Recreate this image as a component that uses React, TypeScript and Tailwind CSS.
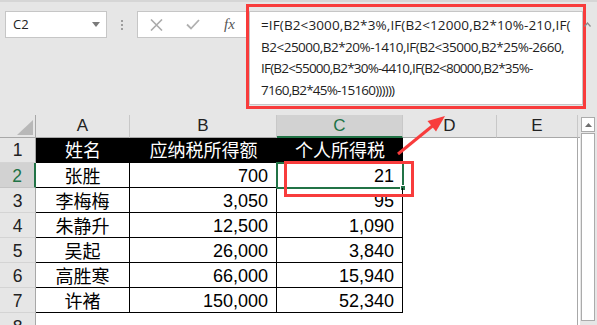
import { FC } from "react";

const rows = [
  { n: "2", name: "张胜", amount: "700", tax: "21" },
  { n: "3", name: "李梅梅", amount: "3,050", tax: "95" },
  { n: "4", name: "朱静升", amount: "12,500", tax: "1,090" },
  { n: "5", name: "吴起", amount: "26,000", tax: "3,840" },
  { n: "6", name: "高胜寒", amount: "66,000", tax: "15,940" },
  { n: "7", name: "许褚", amount: "150,000", tax: "52,340" },
];

// the lines wrap at fixed points in the formula bar
const formula = [
  { t: "=IF(B2<3000,B2*3%,IF(B2<12000,B2*10%-210,IF(", c: "tracking-[0.12px]" },
  { t: "B2<25000,B2*20%-1410,IF(B2<35000,B2*25%-2660,", c: "tracking-[-0.5px]" },
  { t: "IF(B2<55000,B2*30%-4410,IF(B2<80000,B2*35%-", c: "tracking-[-0.8px]" },
  { t: "7160,B2*45%-15160))))))", c: "tracking-[-0.8px]" },
];

const App: FC = () => {
  return (
    <div className="relative w-[597px] h-[325px] overflow-hidden bg-[#e6e6e6] font-['Liberation_Sans','Noto_Sans_CJK_SC',sans-serif] text-black">
      <div className="h-[2px] bg-[#d6d6d6]" />
      {/* formula bar */}
      <div className="flex items-start h-[113px]">
        <div className="ml-[5px] mt-[9px] w-[102px] h-[27px] bg-white border border-[#c6c6c6] flex items-center justify-between pl-[7px] pr-[6px]">
          <span className="text-[13px] text-[#222] font-['Open_Sans',sans-serif]">C2</span>
          <svg width="8" height="5" viewBox="0 0 8 5">
            <polygon points="0,0 8,0 4,5" fill="#7a7a7a" />
          </svg>
        </div>
        <div className="ml-[14px] mt-[18px] flex flex-col gap-[2px]">
          <div className="w-[2px] h-[2px] bg-[#9e9e9e]" />
          <div className="w-[2px] h-[2px] bg-[#9e9e9e]" />
          <div className="w-[2px] h-[2px] bg-[#9e9e9e]" />
        </div>
        <div className="ml-[14px] mt-[9px] w-[109px] h-[27px] bg-white border border-r-0 border-[#c6c6c6] flex items-center">
          <svg className="ml-[12px]" width="13" height="12" viewBox="0 0 13 12">
            <path d="M1 0.5 L12 11.5 M12 0.5 L1 11.5" stroke="#ababab" strokeWidth="1.6" />
          </svg>
          <svg className="ml-[23px]" width="14" height="11" viewBox="0 0 14 11">
            <path d="M1 5.5 L5 9.5 L13 1" stroke="#b0b0b0" strokeWidth="1.8" fill="none" />
          </svg>
          <span className="ml-[24px] text-[15px] italic text-[#555] font-['Liberation_Serif',serif] leading-none">fx</span>
        </div>
        <div className="mt-[2px] w-[340px] h-[105px] border-[3px] border-[#f83c3c] pt-[4px] pb-[1px]">
          <div className="h-full bg-white border border-[#c6c6c6] pl-[11px] pt-[3px] font-['Open_Sans',sans-serif] text-[13.5px] leading-[21.7px] text-[#1e1e1e]">
            {formula.map((l) => (
              <div key={l.t} className={`whitespace-nowrap ${l.c}`}>{l.t}</div>
            ))}
          </div>
        </div>
      </div>

      {/* sheet */}
      <div className="flex">
        <div className="w-[580px] bg-white">
          {/* column header */}
          <div className="flex h-[23px] bg-[#e6e6e6] text-[17px] text-[#222]">
            <div className="relative w-[36px] h-full border-r border-b border-[#a8a8a8]">
              <svg className="absolute right-[2px] bottom-[2px]" width="16" height="15" viewBox="0 0 16 15">
                <polygon points="16,0 16,15 0,15" fill="#b8b8b8" />
              </svg>
            </div>
            <div className="w-[94px] border-r border-r-[#c8c8c8] border-b border-b-[#a8a8a8] flex items-center justify-center">A</div>
            <div className="w-[147px] border-r border-r-[#c8c8c8] border-b border-b-[#a8a8a8] flex items-center justify-center">B</div>
            <div className="w-[126px] bg-[#d2d2d2] border-r border-r-[#c8c8c8] border-b-2 border-b-[#217346] flex items-center justify-center text-[#217346]">C</div>
            <div className="w-[94px] border-r border-r-[#c8c8c8] border-b border-b-[#a8a8a8] flex items-center justify-center">D</div>
            <div className="w-[81px] border-r border-r-[#c8c8c8] border-b border-b-[#a8a8a8] flex items-center justify-center">E</div>
            <div className="w-[2px] border-b border-b-[#a8a8a8]" />
          </div>

          {/* row 1 */}
          <div className="flex h-[25px] text-[18px] leading-[17px]">
            <div className="w-[36px] bg-[#e6e6e6] border-r border-r-[#a8a8a8] border-b border-b-[#d4d4d4] flex items-end justify-center pb-[3px] text-[17.5px] text-[#222]">1</div>
            <div className="w-[94px] bg-black text-white flex items-end justify-center pb-[3px]">姓名</div>
            <div className="w-[147px] bg-black text-white flex items-end justify-center pb-[3px]">应纳税所得额</div>
            <div className="w-[126px] bg-black text-white flex items-end justify-center pb-[3px]">个人所得税</div>
            <div className="w-[94px]" />
            <div className="w-[81px] border-r border-[#a8a8a8]" />
          </div>

          {rows.map((r, i) => (
            <div key={r.n} className="flex h-[25px] text-[18px] leading-[17px]">
              <div
                className={
                  i === 0
                    ? "w-[36px] bg-[#d2d2d2] border-r-2 border-r-[#217346] border-b border-b-[#c4c4c4] flex items-end justify-center pb-[2px] text-[17.5px] text-[#217346]"
                    : "w-[36px] bg-[#e6e6e6] border-r border-r-[#a8a8a8] border-b border-b-[#d4d4d4] flex items-end justify-center pb-[2px] text-[17.5px] text-[#222]"
                }
              >
                {r.n}
              </div>
              <div className="w-[94px] border-r border-b border-black flex items-end justify-center pb-[1px]">{r.name}</div>
              <div className="w-[147px] border-r border-b border-black flex items-end justify-end pr-[8px] pb-[2px]">{r.amount}</div>
              <div className="relative w-[126px] border-r border-b border-black flex items-end justify-end pr-[8px] pb-[2px]">
                {r.tax}
                {i === 0 && (
                  <>
                    <div className="absolute -left-[1px] -top-[1px] -right-[2px] -bottom-[2px] border-2 border-[#217346]" />
                    <div className="absolute -right-[4px] -bottom-[4px] w-[6px] h-[6px] bg-[#217346] border border-white" />
                  </>
                )}
              </div>
              <div className="w-[94px]" />
              <div className="w-[81px] border-r border-[#a8a8a8]" />
            </div>
          ))}

          {/* row 8 */}
          <div className="flex h-[25px] text-[17.5px] leading-[17px]">
            <div className="w-[36px] bg-[#e6e6e6] border-r border-r-[#a8a8a8] flex items-end justify-center pb-[2px] text-[#222]">8</div>
            <div className="w-[461px]" />
            <div className="w-[81px] border-r border-[#a8a8a8]" />
          </div>
        </div>

        {/* scrollbar */}
        <div className="w-[17px] h-[210px] bg-[#e6e6e6] pl-[1px] pr-[2px] pt-[2px] pb-[4px] flex flex-col">
          <div className="h-[15px] bg-white border border-[#ababab] flex items-center justify-center">
            <svg width="7" height="4" viewBox="0 0 7 4">
              <polygon points="0,4 7,4 3.5,0" fill="#6f6f6f" />
            </svg>
          </div>
          <div className="flex-1 mt-[1px] bg-white border border-[#ababab]" />
        </div>
      </div>

      {/* annotations */}
      <svg className="absolute left-[584px] top-[22px]" width="7" height="5" viewBox="0 0 7 5">
        <path d="M0.5 4.5 L3.5 1 L6.5 4.5" stroke="#8a8a8a" strokeWidth="1.2" fill="none" />
      </svg>
      <div className="absolute left-[284px] top-[161px] w-[130px] h-[36px] border-[3px] border-[#f83c3c]" />
      <svg className="absolute left-0 top-0" width="597" height="325" viewBox="0 0 597 325">
        <line x1="398" y1="154" x2="433" y2="125.5" stroke="#f83c3c" strokeWidth="3" />
        <polygon points="445,116 436,131.5 427.5,121" fill="#f83c3c" />
      </svg>
    </div>
  );
};

export default App;
